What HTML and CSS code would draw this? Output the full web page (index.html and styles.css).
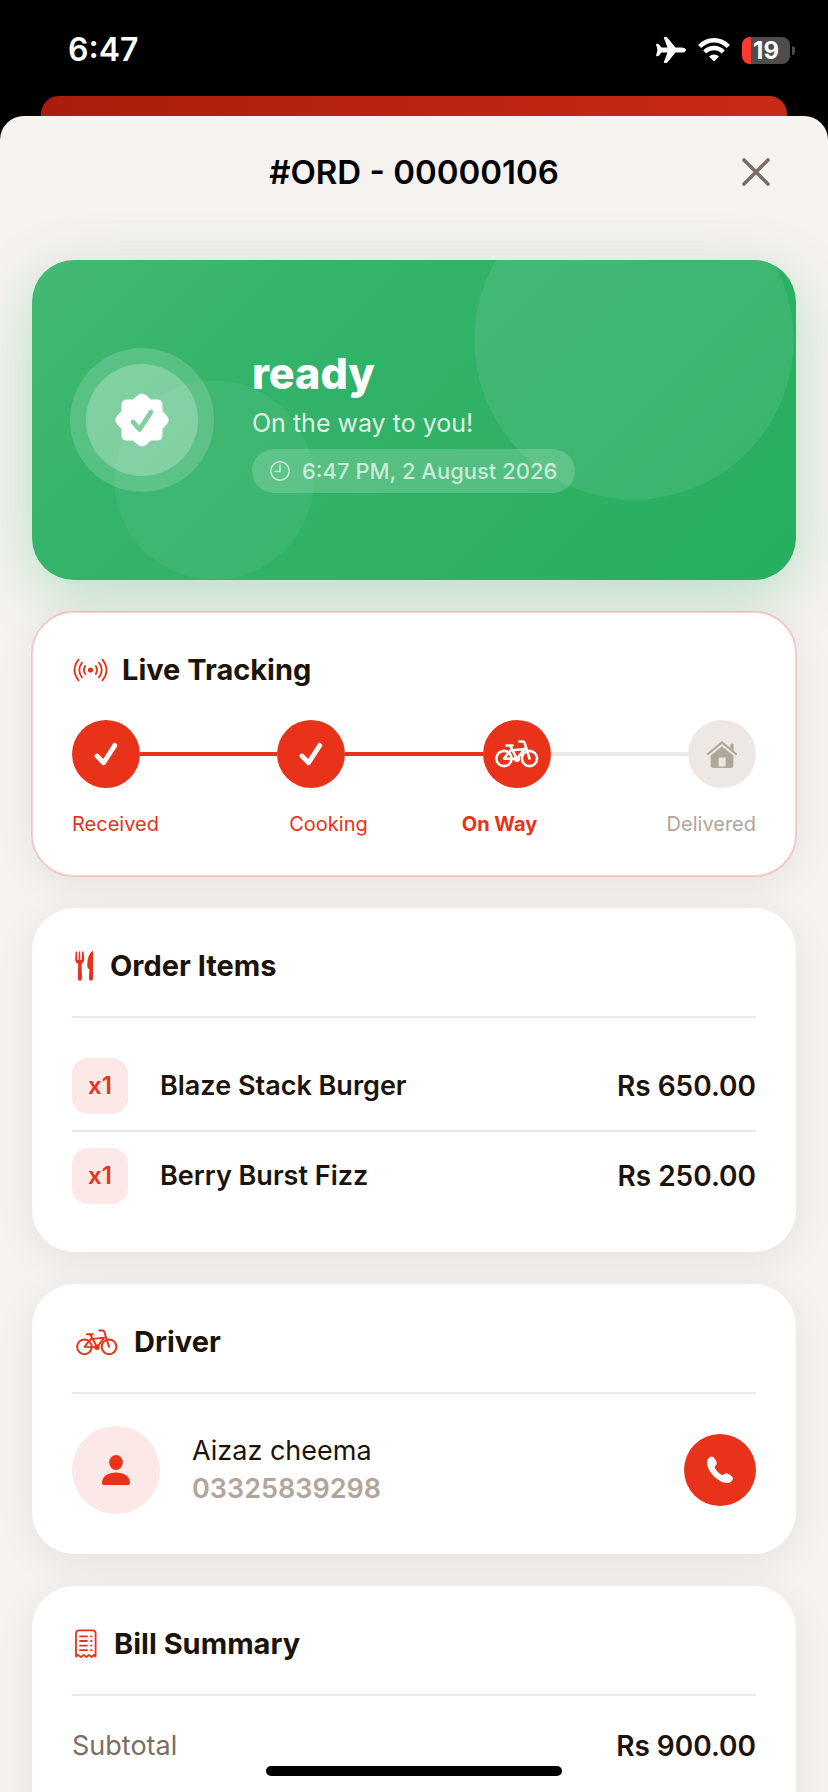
FILE: index.html
```html
<!DOCTYPE html>
<html lang="en">
	<head>
		<meta charset="UTF-8">
		<meta name="viewport" content="width=device-width, initial-scale=1">
		<title>#ORD - 00000106</title>
		<link rel="stylesheet" href="styles.css">
	</head>
	<body>
		<!-- shared icons -->
		<svg class="defs" aria-hidden="true">
			<symbol id="check" viewBox="0 0 24 24">
				<path d="M3 14 L9.6 20.8 L20.8 3.4" fill="none" stroke="currentColor" stroke-width="4.8" stroke-linecap="round" stroke-linejoin="round"/>
			</symbol>
			<symbol id="bike" viewBox="0 0 44 28">
				<g fill="none" stroke="currentColor" stroke-linecap="round" stroke-linejoin="round">
					<circle cx="9" cy="18.5" r="7.6"/>
					<circle cx="34.5" cy="18.5" r="7.6"/>
					<path d="M9 18.5 L15.5 10.5 L29.5 9 L22 19 L15 5.5 M11.5 5.5 H17.5 M9 18.5 L22 19 M24.5 1.5 H28 Q29.2 1.5 29.6 2.9 L34.5 18.5"/>
					<circle cx="22" cy="19" r="1.8"/>
				</g>
			</symbol>
		</svg>

		<div class="app">
			<div class="statusbar">
				<span class="clock">6:47</span>
				<div class="status-icons">
					<svg width="30" height="26" viewBox="0 0 30 26" fill="#fff">
						<path d="M30 13 C30 14.6 28 15.6 25.5 15.6 H19.5 L11.5 25.2 Q11 26 10 26 H8.5 Q7.5 26 7.9 25 L11.5 15.6 H5.5 L3 18.6 Q2.5 19.2 1.5 19.2 H.7 Q0 19.2 .1 18.4 L1.5 13 L.1 7.6 Q0 6.8 .7 6.8 H1.5 Q2.5 6.8 3 7.4 L5.5 10.4 H11.5 L7.9 1 Q7.5 0 8.5 0 H10 Q11 0 11.5 .8 L19.5 10.4 H25.5 C28 10.4 30 11.4 30 13 Z"/>
					</svg>
					<svg width="32" height="24" viewBox="0 0 32 24">
						<g fill="none" stroke="#fff" stroke-width="4.4">
							<path d="M1.6 8.6 C9.6 .2 22.4 .2 30.4 8.6"/>
							<path d="M6.8 14 C12 8.7 20 8.7 25.2 14"/>
						</g>
						<path d="M16 23.6 L11 18.4 C13.8 15.7 18.2 15.7 21 18.4 Z" fill="#fff"/>
					</svg>
					<div class="battery"><span class="level">19</span></div>
				</div>
			</div>

			<div class="behind"></div>

			<main class="sheet">
				<header class="sheet-header">
					<h1>#ORD - 00000106</h1>
					<button class="close" aria-label="Close">
						<svg width="28" height="28" viewBox="0 0 28 28">
							<path d="M2 2 L26 26 M26 2 L2 26" stroke="#7a6e64" stroke-width="3.6" stroke-linecap="round"/>
						</svg>
					</button>
				</header>

				<section class="hero">
					<div class="hero-icon">
						<div class="hero-icon-inner">
							<svg width="54" height="54" viewBox="0 0 54 54">
								<path d="M22.8 2.2 Q27 -1.4 31.2 2.2 L36 6.5 H42 Q47.5 6.5 47.5 12 V18 L52 23 Q55.4 27 52 31 L47.5 36 V42 Q47.5 47.5 42 47.5 H36 L31.2 51.8 Q27 55.4 22.8 51.8 L18 47.5 H12 Q6.5 47.5 6.5 42 V36 L2 31 Q-1.4 27 2 23 L6.5 18 V12 Q6.5 6.5 12 6.5 H18 Z" fill="#fff"/>
								<path d="M18 29 L24.5 36.5 L36 19" fill="none" stroke="#82d0a1" stroke-width="4.8" stroke-linecap="round" stroke-linejoin="round"/>
							</svg>
						</div>
					</div>
					<div class="hero-text">
						<h2>ready</h2>
						<p>On the way to you!</p>
						<div class="pill">
							<svg width="20" height="20" viewBox="0 0 20 20" fill="none" stroke="currentColor" stroke-width="1.5" stroke-linecap="round" stroke-linejoin="round">
								<circle cx="10" cy="10" r="9.2"/>
								<path d="M10 4 V10.6 H5"/>
							</svg>
							<time datetime="2026-08-02T18:47">6:47 PM, 2 August 2026</time>
						</div>
					</div>
				</section>

				<section class="card tracking">
					<h2 class="card-title">
						<svg width="38" height="24" viewBox="0 0 38 24" fill="none" stroke="currentColor" stroke-width="1.8" stroke-linecap="round">
							<circle cx="18.5" cy="12" r="2.6" fill="currentColor" stroke="none"/>
							<path d="M13.2 8 Q10.6 12 13.2 16 M23.8 8 Q26.4 12 23.8 16"/>
							<path d="M10 4.6 Q4.6 12 10 19.4 M27 4.6 Q32.4 12 27 19.4"/>
							<path d="M6.6 1.6 Q-1.6 12 6.6 22.4 M30.4 1.6 Q38.6 12 30.4 22.4"/>
						</svg>
						Live Tracking
					</h2>
					<div class="steps">
						<span class="step"><svg width="24" height="24"><use href="#check"/></svg></span>
						<span class="line"></span>
						<span class="step"><svg width="24" height="24"><use href="#check"/></svg></span>
						<span class="line"></span>
						<span class="step"><svg class="bike bold" width="44" height="28"><use href="#bike"/></svg></span>
						<span class="line off"></span>
						<span class="step off">
							<svg width="32" height="28" viewBox="0 0 32 28">
								<path d="M2 14 L16 2.4 L30 14" fill="none" stroke="currentColor" stroke-width="2.2" stroke-linecap="round" stroke-linejoin="round"/>
								<path d="M24.4 9 V4.6 Q24.4 3.6 25.4 3.6 H26.6 Q27.6 3.6 27.6 4.6 V11.6 Z" fill="currentColor"/>
								<path d="M16 6.2 L27.4 15.6 V25 Q27.4 28 24.4 28 H7.6 Q4.6 28 4.6 25 V15.6 Z" fill="currentColor"/>
								<rect x="12.6" y="17.4" width="7" height="9" rx="1" fill="#ede8e4"/>
							</svg>
						</span>
					</div>
					<div class="labels">
						<span>Received</span>
						<span>Cooking</span>
						<span class="current">On Way</span>
						<span class="off">Delivered</span>
					</div>
				</section>

				<section class="card">
					<h2 class="card-title ruled">
						<svg width="26" height="32" viewBox="0 0 26 32" fill="currentColor">
							<path d="M3.6 2 Q4.4 .6 5 2 L5.4 10 H6.6 L6.8 2 Q7.5 .6 8.2 2 L8.4 10 H9.6 L10 2 Q10.8 .6 11.6 2 L12.2 9.6 Q12.2 12.8 9.6 14 L10 28.6 Q9.8 30.8 8 30.8 Q6 30.8 5.8 28.6 L6.2 14 Q3.2 12.8 3.2 9.6 Z"/>
							<path d="M21 1.4 V28.6 Q20.8 30.8 19 30.8 Q17 30.8 17 28.6 L17.4 19.4 Q15 18 15.2 14.4 Q15.6 4.6 20 1.2 Q20.8 .6 21 1.4 Z"/>
						</svg>
						Order Items
					</h2>
					<ul class="items">
						<li>
							<span class="qty">x1</span>
							<span class="name">Blaze Stack Burger</span>
							<span class="price">Rs 650.00</span>
						</li>
						<li>
							<span class="qty">x1</span>
							<span class="name">Berry Burst Fizz</span>
							<span class="price">Rs 250.00</span>
						</li>
					</ul>
				</section>

				<section class="card">
					<h2 class="card-title ruled">
						<svg class="bike" width="50" height="27"><use href="#bike"/></svg>
						Driver
					</h2>
					<div class="driver">
						<div class="avatar">
							<svg width="28" height="30" viewBox="0 0 28 30" fill="currentColor">
								<ellipse cx="14" cy="7.5" rx="6.8" ry="7.4"/>
								<path d="M0 27.4 C.4 21.4 6 17.6 14 17.6 C22 17.6 27.6 21.4 28 27.4 Q28 30 25.4 30 H2.6 Q0 30 0 27.4 Z"/>
							</svg>
						</div>
						<div class="driver-info">
							<span>Aizaz cheema</span>
							<span class="phone">03325839298</span>
						</div>
						<a class="call" href="tel:03325839298" aria-label="Call driver">
							<svg width="28" height="28" viewBox="0 0 28 28" fill="#fff">
								<path d="M5.4 .6 C7.8 .2 10.8 5.4 10.8 7.2 C10.8 9.2 8.6 9.8 8.8 11.6 C9.2 13.6 14.2 18.8 16 19 C17.8 19.2 18.6 17 20.6 17.2 C22.4 17.4 27.4 20.6 27 22.8 C26.6 25.2 24 27.2 21 27 C12 26.4 1.2 15.4 1 6.4 C1 3.4 3 1 5.4 .6 Z"/>
							</svg>
						</a>
					</div>
				</section>

				<section class="card bill">
					<h2 class="card-title ruled">
						<svg width="30" height="30" viewBox="0 0 30 30" fill="none" stroke="currentColor" stroke-width="1.8" stroke-linecap="round" stroke-linejoin="round">
							<path d="M4 27.6 V4.4 Q4 1.4 7 1.4 H20.6 Q23.6 1.4 23.6 4.4 V27.6 L21.8 26 L19.6 28 L17 26 L14.4 28 L11.8 26 L9 28 L6 26 Z"/>
							<path d="M8 7.4 H15 M8 12 H15 M8 16.6 H15 M8 21.2 H15 M19 7.4 H19.6 M19 12 H19.6 M19 16.6 H19.6 M19 21.2 H19.6"/>
						</svg>
						Bill Summary
					</h2>
					<dl class="totals">
						<dt>Subtotal</dt>
						<dd class="price">Rs 900.00</dd>
					</dl>
				</section>
			</main>
			<div class="home-indicator"></div>
		</div>
	</body>
</html>
```
FILE: styles.css
```css
* {
	box-sizing: border-box;
}
body {
	margin: 0;
	background-color: #000;
	color: #1c130a;
	font-family: Inter, "Liberation Sans", sans-serif;
	font-size: 27px;
	line-height: 36px;
}
h1, h2, p, ul, dl, dd {
	margin: 0;
	padding: 0;
}
svg {
	display: block;
	flex-shrink: 0;
}
.defs {
	position: absolute;
	width: 0;
	height: 0;
}
.app {
	display: flex;
	flex-direction: column;
	height: 100vh;
	overflow: hidden;
}

/* status bar */
.statusbar {
	display: flex;
	justify-content: space-between;
	align-items: center;
	flex-shrink: 0;
	height: 96px;
	padding: 4px 33px 0 68px;
	color: #fff;
}
.clock {
	font-size: 32px;
	font-weight: 600;
}
.status-icons {
	display: flex;
	align-items: center;
	gap: 12px;
}
.battery {
	display: flex;
	align-items: center;
	gap: 2px;
}
.battery::after {
	content: "";
	width: 3px;
	height: 9px;
	border-radius: 0 4px 4px 0;
	background-color: #4d4d4d;
}
.level {
	width: 48px;
	border-radius: 8px;
	background: linear-gradient(90deg, #ff3b30 9px, #4d4d4d 9px);
	font-size: 24px;
	font-weight: 700;
	line-height: 27px;
	text-align: center;
}

/* sheet */
.behind {
	flex-shrink: 0;
	height: 20px;
	margin: 0 41px;
	border-radius: 18px 18px 0 0;
	background: linear-gradient(90deg, #a91c0b, #c82a15);
}
.sheet {
	flex: 1;
	padding: 0 32px 32px;
	border-radius: 24px 24px 0 0;
	background-color: #f6f2ef;
	overflow: auto;
	scrollbar-width: none;
}
.sheet-header {
	display: grid;
	grid-template-columns: 80px 1fr 80px;
	align-items: center;
	height: 112px;
	margin-bottom: 32px;
}
.sheet-header h1 {
	grid-column: 2;
	color: #000;
	font-size: 33px;
	font-weight: 600;
	text-align: center;
}
.close {
	justify-self: center;
	padding: 8px;
	border: none;
	background: none;
	cursor: pointer;
}

/* order state */
.hero {
	display: flex;
	align-items: center;
	gap: 38px;
	height: 320px;
	padding: 0 38px;
	border-radius: 42px;
	background:
		radial-gradient(circle at calc(100% - 162px) 80px, rgba(255, 255, 255, 0.08) 159px, transparent 160px),
		radial-gradient(circle at 182px 220px, rgba(255, 255, 255, 0.05) 99px, transparent 100px),
		linear-gradient(135deg, #43b973, #34b36a 30%, #27ae60);
	box-shadow: 0 16px 60px rgba(39, 174, 96, 0.3);
	color: #fff;
}
.hero-icon {
	display: flex;
	padding: 16px;
	border-radius: 50%;
	background-color: rgba(255, 255, 255, 0.16);
}
.hero-icon-inner {
	display: flex;
	align-items: center;
	justify-content: center;
	width: 112px;
	height: 112px;
	border-radius: 50%;
	background-color: rgba(255, 255, 255, 0.24);
}
.hero-text {
	display: flex;
	flex-direction: column;
	align-items: flex-start;
}
.hero-text h2 {
	font-size: 43px;
	font-weight: 800;
	line-height: 52px;
}
.hero-text p {
	margin: 6px 0 8px;
	color: rgba(255, 255, 255, 0.85);
	font-size: 25px;
}
.pill {
	display: flex;
	align-items: center;
	gap: 12px;
	padding: 4px 18px;
	border-radius: 22px;
	background-color: rgba(255, 255, 255, 0.18);
	color: rgba(255, 255, 255, 0.7);
	font-size: 22px;
	font-weight: 500;
}

/* cards */
.card {
	margin-top: 32px;
	padding: 40px;
	border-radius: 42px;
	background-color: #fff;
	box-shadow: 0 8px 40px rgba(28, 19, 10, 0.07);
}
.card-title {
	display: flex;
	align-items: center;
	gap: 12px;
	font-size: 29px;
	font-weight: 700;
	line-height: 36px;
}
.card-title svg {
	color: #e8321a;
}
.ruled {
	padding-bottom: 32px;
	border-bottom: 2px solid #ede8e4;
}
.bike {
	stroke-width: 2;
}
.bold {
	stroke-width: 2.6;
}
.price {
	font-size: 28px;
	font-weight: 600;
}

/* tracking */
.tracking {
	outline: 2px solid rgba(232, 50, 26, 0.2);
	outline-offset: -1px;
}
.steps {
	display: flex;
	align-items: center;
	margin-top: 32px;
}
.step {
	display: flex;
	align-items: center;
	justify-content: center;
	width: 68px;
	height: 68px;
	border-radius: 50%;
	background-color: #e8321a;
	color: #fff;
}
.step.off {
	background-color: #ede8e4;
	color: #b0a69c;
}
.line {
	flex: 1;
	height: 4px;
	background-color: #e8321a;
}
.line.off {
	background-color: #ede8e4;
}
.labels {
	display: grid;
	grid-template-columns: repeat(4, 1fr);
	margin-top: 24px;
	color: #e8321a;
	font-size: 20px;
	line-height: 24px;
	text-align: center;
}
.labels span:first-child {
	text-align: left;
}
.labels span:last-child {
	text-align: right;
}
.labels .current {
	font-weight: 700;
}
.labels .off {
	color: #b0a69c;
}

/* items */
.items {
	padding: 24px 0 0;
	margin-bottom: -8px;
	list-style: none;
}
.items li {
	display: flex;
	align-items: center;
	gap: 32px;
	padding: 16px 0;
	font-weight: 600;
}
.items li + li {
	border-top: 2px solid #ede8e4;
}
.qty {
	width: 56px;
	border-radius: 16px;
	background-color: #fce9e7;
	color: #e8321a;
	font-size: 24px;
	line-height: 56px;
	text-align: center;
}
.name {
	flex: 1;
}

/* driver */
.driver {
	display: flex;
	align-items: center;
	gap: 32px;
	padding-top: 32px;
}
.avatar {
	display: flex;
	align-items: center;
	justify-content: center;
	width: 88px;
	height: 88px;
	border-radius: 50%;
	background-color: #fce9e7;
	color: #e8321a;
}
.driver-info {
	display: flex;
	flex: 1;
	flex-direction: column;
	line-height: 38px;
}
.phone {
	color: #b0a69c;
	font-weight: 600;
}
.call {
	display: flex;
	align-items: center;
	justify-content: center;
	width: 72px;
	height: 72px;
	border-radius: 50%;
	background-color: #e8321a;
}

/* bill */
.bill {
	padding-bottom: 80px;
}
.totals {
	display: flex;
	justify-content: space-between;
	padding-top: 32px;
}
.totals dt {
	color: #7a6e64;
}

.home-indicator {
	position: fixed;
	bottom: 16px;
	left: 50%;
	width: 296px;
	height: 10px;
	margin-left: -148px;
	border-radius: 5px;
	background-color: #000;
}
```
